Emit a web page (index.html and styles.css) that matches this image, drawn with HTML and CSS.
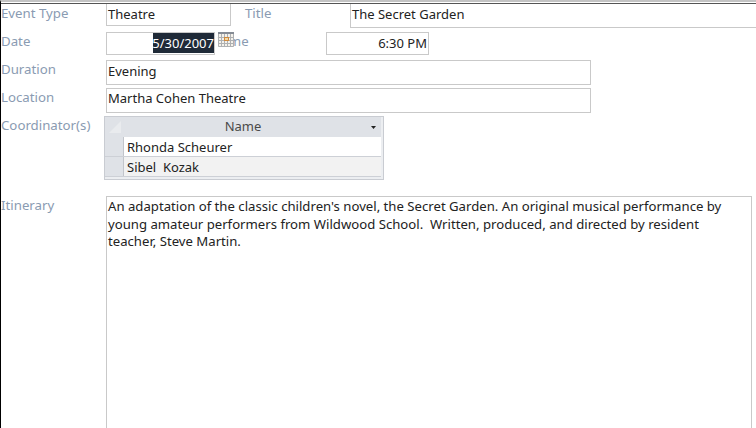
FILE: index.html
```html
<!DOCTYPE html>
<html lang="en">
<head>
<meta charset="utf-8">
<title>Event Details</title>
<link rel="stylesheet" href="styles.css">
</head>
<body>
<div class="form">
  <div class="row row-type">
    <span class="label">Event Type</span>
    <div class="field field-type">Theatre</div>
    <span class="label label-title">Title</span>
    <div class="field field-title">The Secret Garden</div>
  </div>
  <div class="row row-date">
    <span class="label">Date</span>
    <div class="field field-date"><span class="selected">5/30/2007</span></div>
    <div class="time-label">
      <span class="label">Time</span>
      <svg class="cal" width="16" height="15" viewBox="0 0 16 15">
        <rect x="0" y="0" width="16" height="15" fill="#f4f1ea"/>
        <rect x="0" y="0" width="16" height="2" fill="#858b94"/>
        <path d="M.5 2v12.500h15V2M3.500 2v12M6.500 2v12M9.500 2v12M12.500 2v12M0 5.500h16M0 8.500h16M0 11.500h16" fill="none" stroke="#aeb0b2"/>
        <rect x="6.500" y="5.500" width="4" height="3" fill="#f3d9a8" stroke="#d08a3c"/>
      </svg>
    </div>
    <div class="field field-time">6:30 PM</div>
  </div>
  <div class="row row-duration">
    <span class="label">Duration</span>
    <div class="field field-wide">Evening</div>
  </div>
  <div class="row row-location">
    <span class="label">Location</span>
    <div class="field field-wide field-loc">Martha Cohen Theatre</div>
  </div>
  <div class="row row-coord">
    <span class="label">Coordinator(s)</span>
    <div class="subform">
      <div class="sub-head">
        <svg class="corner" width="14" height="14" viewBox="0 0 14 14"><path d="M1 13L13 1V13Z" fill="#e9ebee"/></svg>
        <span class="sub-name">Name</span>
        <svg class="sub-arrow" width="5" height="3" viewBox="0 0 5 3"><path d="M0 0H5L2.500 3Z" fill="#222"/></svg>
      </div>
      <div class="sub-row">
        <div class="sub-sel"></div>
        <div class="sub-cell">Rhonda Scheurer</div>
      </div>
      <div class="sub-row sub-row-alt">
        <div class="sub-sel"></div>
        <div class="sub-cell">Sibel&nbsp; Kozak</div>
      </div>
    </div>
  </div>
  <div class="row row-itin">
    <span class="label">Itinerary</span>
    <div class="field field-itin">An adaptation of the classic children's novel, the Secret Garden. An original musical performance by young amateur performers from Wildwood School.&nbsp; Written, produced, and directed by resident teacher, Steve Martin.</div>
  </div>
</div>
</body>
</html>
```
FILE: styles.css
```css
html, body {
  margin: 0;
  padding: 0;
  width: 756px;
  height: 428px;
  overflow: hidden;
  background: #fff;
}
.form {
  box-sizing: border-box;
  width: 756px;
  height: 428px;
  overflow: hidden;
  border-left: 1px solid #000;
  border-top: 2px solid #c4c4c4;
  box-shadow: inset 0 2px 0 #fff;
  font: 13px/17px "Noto Sans", "Open Sans", sans-serif;
  color: #222;
  display: flex;
  flex-direction: column;
  position: relative;
}
.form::before {
  content: "";
  height: 1px;
  margin-top: 1px;
  background: #555;
  flex: none;
}
.row {
  display: flex;
  align-items: flex-start;
  flex: none;
}
.label {
  flex: none;
  width: 105px;
  color: #8a9bb2;
  font-size: 13.250px;
  line-height: 16px;
}
.field {
  box-sizing: border-box;
  flex: none;
  border: 1px solid #c9c9c9;
  padding: 2px 1px;
  white-space: nowrap;
}
.row-type { height: 28px; }
.row-type .label { margin-top: 1px; }
.field-type {
  width: 125px;
  height: 22px;
  border-top: 0;
  padding-top: 2px;
}
.row-type .label-title {
  width: 105px;
  margin-left: 14px;
  margin-top: 1px;
}
.field-title {
  width: 411px;
  height: 24px;
  border-top: 0;
  border-right: 0;
  padding-top: 2px;
}
.row-date { height: 28px; }
.row-date .label { margin-top: 1px; }
.field-date {
  width: 109px;
  height: 23px;
  text-align: right;
  padding: 0;
  line-height: 20px;
}
.selected {
  display: inline-block;
  background: #1f2a38;
  color: #fff;
  width: 61px;
  height: 20px;
  line-height: 20px;
  overflow: hidden;
  direction: rtl;
  text-align: left;
}
.time-label {
  position: relative;
  flex: none;
  width: 111px;
  height: 23px;
}
.time-label .label {
  position: absolute;
  left: 3px;
  top: 0;
  margin-top: 1px;
  width: auto;
}
.cal {
  position: absolute;
  left: 3px;
  top: 0;
}
.field-time {
  width: 103px;
  height: 23px;
  text-align: right;
  padding: 0 1px;
  line-height: 20px;
}
.row-duration, .row-location { height: 28px; }
.row-duration .label, .row-location .label { margin-top: 1px; }
.field-wide {
  width: 485px;
  height: 25px;
  line-height: 19px;
  padding: 1px;
}
.field-loc { padding-top: 0; }
.row-coord { height: 80px; }
.row-coord .label { margin-top: 1px; width: 103px; }
.subform {
  box-sizing: border-box;
  flex: none;
  width: 280px;
  height: 64px;
  border: 1px solid #c9ccd2;
  background: #eceef1;
  padding: 0 2px 3px 0;
}
.sub-head {
  display: flex;
  align-items: center;
  height: 20px;
  background: #dfe2e7;
  position: relative;
  justify-content: center;
  box-sizing: border-box;
  color: #4a4a4a;
}
.corner { position: absolute; left: 3px; top: 3px; }
.sub-name { line-height: 18px; margin-bottom: 2px; }
.sub-arrow { position: absolute; right: 5px; top: 9px; }
.sub-row {
  box-sizing: border-box;
  display: flex;
  height: 20px;
  background: #fff;
  border-bottom: 1px solid #cdd0d6;
}
.sub-row-alt { background: #f2f2f2; }
.sub-sel {
  flex: none;
  width: 19px;
  background: #dfe2e7;
  border-right: 1px solid #c2c5cb;
  box-sizing: border-box;
}
.sub-cell {
  padding-left: 3px;
  line-height: 21px;
}
.field-itin {
  width: 646px;
  height: 300px;
  white-space: normal;
  font-size: 13.170px;
  line-height: 17.500px;
  padding: 1px 20px 1px 1px;
}
.row-itin .label { margin-top: 1px; }
```
